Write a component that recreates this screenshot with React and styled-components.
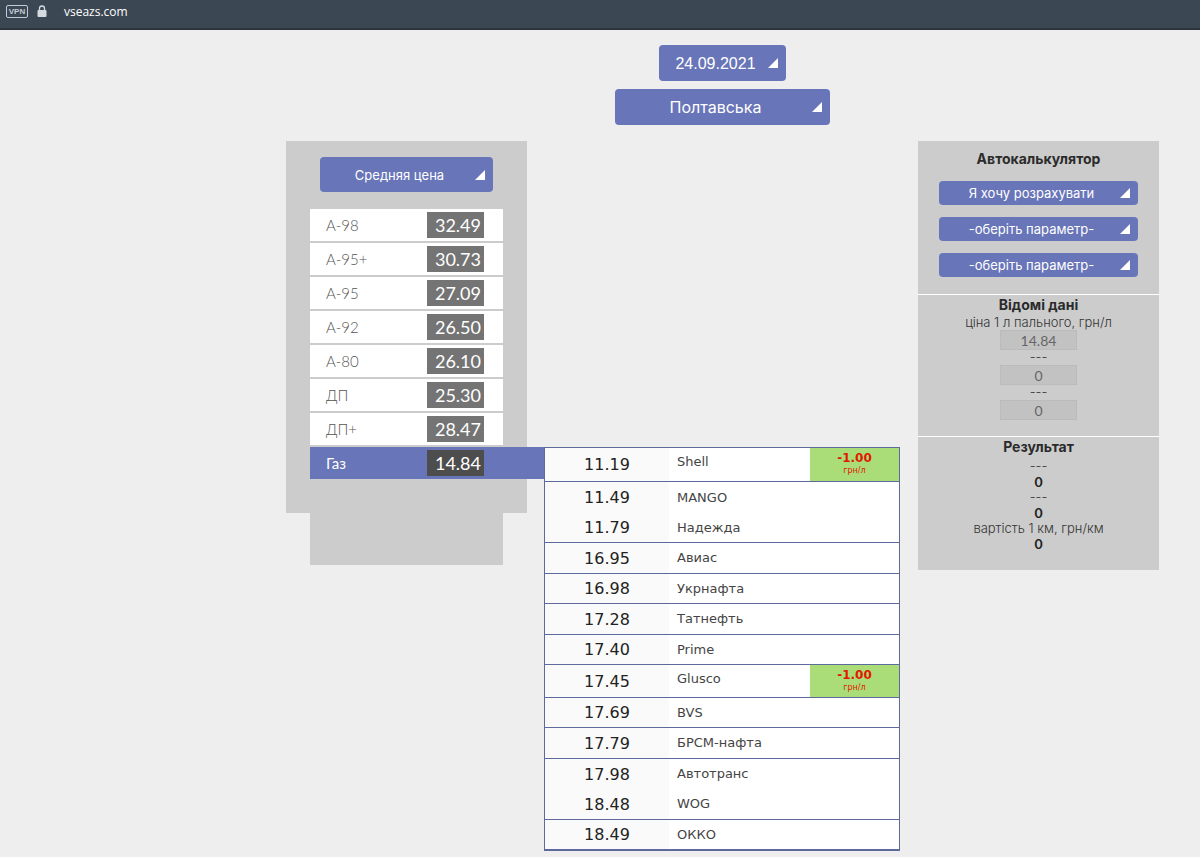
import React, { useState } from "react";
import styled, { createGlobalStyle, css } from "styled-components";

const gothic = `"Century Gothic", Inter, "Open Sans", sans-serif`;
const rounded = `"Century Gothic", Lato, "Open Sans", sans-serif`;
const verdana = `Verdana, "DejaVu Sans", sans-serif`;
const arial = `Arial, "Liberation Sans", sans-serif`;
const blue = "#6875b8";
const line = "#5f6a9c";

const GlobalStyle = createGlobalStyle`
  *, *::before, *::after { box-sizing: border-box; }
  body { margin: 0; background: #eee; color: #2b2b2b; font-family: ${gothic}; }
`;

const BrowserBar = styled.header`
  display: flex;
  align-items: flex-start;
  height: 30px;
  padding: 4px 6px 0;
  background: #3b4753;
  border-bottom: 2px solid #2b343d;
  color: #fff;
`;

const VpnBadge = styled.span`
  width: 22px;
  height: 13px;
  margin-top: 1px;
  border: 1px solid #c3cbd2;
  border-radius: 2px;
  color: #c3cbd2;
  font: 700 8px/11px ${arial};
  text-align: center;
`;

const LockIcon = styled.svg`
  width: 10px;
  height: 13px;
  margin: 1px 17px 0 9px;
`;

const Address = styled.span`
  font: 12px/16px "Open Sans", sans-serif;
`;

const Page = styled.main`
  padding: 15px 41px 6px 286px;
`;

const Filters = styled.div`
  display: flex;
  flex-direction: column;
  align-items: center;
  gap: 8px;
  margin-bottom: 16px;
`;

const Columns = styled.div`
  display: grid;
  grid-template-columns: 241px 1fr 241px;
  align-items: start;
`;

const SelectBox = styled.label`
  position: relative;
  display: block;
  width: ${(p) => p.$width}px;
  max-width: 100%;
`;

const Select = styled.select`
  display: block;
  appearance: none;
  width: 100%;
  height: ${(p) => p.$height}px;
  padding: 0 14px 0 0;
  border: 0;
  border-radius: 4px;
  background: ${blue};
  color: #fff;
  font-family: ${(p) => p.$font || gothic};
  font-size: ${(p) => p.$size}px;
  text-align: center;
  text-align-last: center;
  cursor: pointer;
`;

const Corner = styled.svg`
  position: absolute;
  right: 8px;
  top: 50%;
  width: 10px;
  height: 10px;
  margin-top: -5px;
  pointer-events: none;
`;

function Dropdown({ name, value, width, height, size, font }) {
  return (
    <SelectBox $width={width}>
      <Select aria-label={name} $height={height} $size={size} $font={font}>
        <option>{value}</option>
      </Select>
      <Corner viewBox="0 0 10 10" aria-hidden="true">
        <path d="M10 0V10H0Z" fill="#fff" />
      </Corner>
    </SelectBox>
  );
}

const FuelPanel = styled.section`
  display: flex;
  flex-direction: column;
  align-items: center;
  gap: 17px;
  padding: 16px 24px 34px;
  background: #ccc;
`;

const FuelFoot = styled.div`
  height: 52px;
  margin: 0 24px;
  background: #ccc;
`;

const FuelList = styled.ul`
  display: grid;
  gap: 2px;
  width: 100%;
  margin: 0;
  padding: 0;
  list-style: none;
`;

const FuelValue = styled.span`
  width: 57px;
  padding-right: 3px;
  background: #747474;
  color: #fff;
  font-size: 18px;
  font-weight: 400;
  line-height: 26px;
  text-align: right;
`;

const FuelButton = styled.button`
  display: grid;
  grid-template-columns: 1fr 57px;
  align-items: center;
  width: 100%;
  height: 32px;
  padding: 0 19px 0 16px;
  border: 0;
  background: #fff;
  color: #555;
  font: 300 15px/20px ${rounded};
  text-align: left;
  cursor: pointer;
  ${(p) =>
    p.$active &&
    css`
      width: calc(100% + 41px);
      padding-right: 60px;
      background: ${blue};
      color: #fff;
      font-weight: 400;
      ${FuelValue} { background: #4d4d4d; }
    `}
`;

const Stations = styled.table`
  margin: 306px 18px 0 17px;
  border: 1px solid ${line};
  border-spacing: 0;
  background: #fff;
  font-family: ${verdana};
  td, th { padding: 0; font-weight: 400; text-align: left; }
`;

const StationRow = styled.tr`
  height: ${(p) => (p.$discount ? 34 : 30)}px;
  &:nth-child(even) { height: ${(p) => (p.$discount ? 33 : 31)}px; }
  > * { border-bottom: ${(p) => (p.$joined ? "0" : `1px solid ${line}`)}; }
  th { vertical-align: ${(p) => (p.$discount ? "top" : "middle")}; }
`;

const Price = styled.td`
  width: 124px;
  background: #fafafa;
  color: #222;
  font-size: 16px;
  line-height: 20px;
  && { padding-top: 1px; text-align: center; }
`;

const Brand = styled.th`
  color: #444;
  font-size: 13px;
  line-height: 18px;
  && { padding: 5px 8px; }
`;

const Discount = styled.td`
  width: 89px;
  background: #aadd77;
  color: #e01a00;
  vertical-align: top;
  font-size: 8px;
  line-height: 10px;
  && { padding-top: 2px; text-align: center; }
  strong { display: block; font-size: 12px; line-height: 16px; }
`;

const Calculator = styled.section`
  background: #ccc;
  text-align: center;
`;

const Block = styled.div`
  display: flex;
  flex-direction: column;
  align-items: center;
  padding-bottom: ${(p) => p.$bottom}px;
  & + & { border-top: 1px solid #fff; }
`;

const Title = styled.h2`
  margin: 0;
  padding: ${(p) => (p.$top ? "8px 0 12px" : "0")};
  font-size: 14px;
  font-weight: 700;
  line-height: 20px;
`;

const CalcSelects = styled.div`
  display: grid;
  gap: 12px;
`;

const Results = styled.div`
  padding-top: 2px;
`;

const Field = styled.label`
  display: flex;
  flex-direction: column;
  align-items: center;
  color: #333;
  font-size: 13px;
  font-weight: 300;
  line-height: 15px;
`;

const Value = styled.input`
  width: 77px;
  height: 20px;
  padding: 0;
  border: 1px solid #bbb;
  background: #c2c2c2;
  color: #666;
  font: 14px/18px ${rounded};
  text-align: center;
`;

const Result = styled.output`
  color: #222;
  font: 700 14px/16px ${rounded};
`;

const fuels = [
  ["А-98", "32.49"],
  ["А-95+", "30.73"],
  ["А-95", "27.09"],
  ["А-92", "26.50"],
  ["А-80", "26.10"],
  ["ДП", "25.30"],
  ["ДП+", "28.47"],
  ["Газ", "14.84"],
];

const stations = [
  { price: "11.19", brand: "Shell", discount: "-1.00" },
  { price: "11.49", brand: "MANGO", joined: true },
  { price: "11.79", brand: "Надежда" },
  { price: "16.95", brand: "Авиас" },
  { price: "16.98", brand: "Укрнафта" },
  { price: "17.28", brand: "Татнефть" },
  { price: "17.40", brand: "Prime" },
  { price: "17.45", brand: "Glusco", discount: "-1.00" },
  { price: "17.69", brand: "BVS" },
  { price: "17.79", brand: "БРСМ-нафта" },
  { price: "17.98", brand: "Автотранс", joined: true },
  { price: "18.48", brand: "WOG" },
  { price: "18.49", brand: "ОККО" },
];

export default function App() {
  const [active, setActive] = useState("Газ");
  return (
    <>
      <GlobalStyle />
      <BrowserBar>
        <VpnBadge>VPN</VpnBadge>
        <LockIcon viewBox="0 0 10 13" aria-hidden="true">
          <path d="M2.5 6V3.5a2.5 2.5 0 0 1 5 0V6" fill="none" stroke="#d5dbe0" strokeWidth="1.3" />
          <rect x="0.5" y="5" width="9" height="7" rx="1" fill="#d5dbe0" />
        </LockIcon>
        <Address>vseazs.com</Address>
      </BrowserBar>
      <Page>
        <Filters>
          <Dropdown name="Дата" value="24.09.2021" width={127} height={36} size={16} font={arial} />
          <Dropdown name="Область" value="Полтавська" width={215} height={36} size={16} />
        </Filters>
        <Columns>
          <aside>
            <FuelPanel>
              <Dropdown name="Цена" value="Средняя цена" width={173} height={35} size={13} />
              <FuelList>
                {fuels.map(([name, price]) => (
                  <li key={name}>
                    <FuelButton type="button" $active={name === active} onClick={() => setActive(name)}>
                      <span>{name}</span>
                      <FuelValue>{price}</FuelValue>
                    </FuelButton>
                  </li>
                ))}
              </FuelList>
            </FuelPanel>
            <FuelFoot />
          </aside>
          <Stations>
            <tbody>
              {stations.map((s) => (
                <StationRow key={s.brand} $discount={!!s.discount} $joined={s.joined}>
                  <Price>{s.price}</Price>
                  <Brand scope="row" colSpan={s.discount ? 1 : 2}>{s.brand}</Brand>
                  {s.discount && (
                    <Discount>
                      <strong>{s.discount}</strong>грн/л
                    </Discount>
                  )}
                </StationRow>
              ))}
            </tbody>
          </Stations>
          <Calculator>
            <Block $bottom={17}>
              <Title $top>Автокалькулятор</Title>
              <CalcSelects>
                <Dropdown name="Розрахунок" value="Я хочу розрахувати" width={199} height={24} size={13} />
                <Dropdown name="Параметр 1" value="-оберіть параметр-" width={199} height={24} size={13} />
                <Dropdown name="Параметр 2" value="-оберіть параметр-" width={199} height={24} size={13} />
              </CalcSelects>
            </Block>
            <Block $bottom={16}>
              <Title>Відомі дані</Title>
              <Field>ціна 1 л пального, грн/л<Value disabled defaultValue="14.84" /></Field>
              <Field>---<Value disabled defaultValue="0" /></Field>
              <Field>---<Value disabled defaultValue="0" /></Field>
            </Block>
            <Block $bottom={18}>
              <Title>Результат</Title>
              <Results>
                <Field>---<Result>0</Result></Field>
                <Field>---<Result>0</Result></Field>
                <Field>вартість 1 км, грн/км<Result>0</Result></Field>
              </Results>
            </Block>
          </Calculator>
        </Columns>
      </Page>
    </>
  );
}
